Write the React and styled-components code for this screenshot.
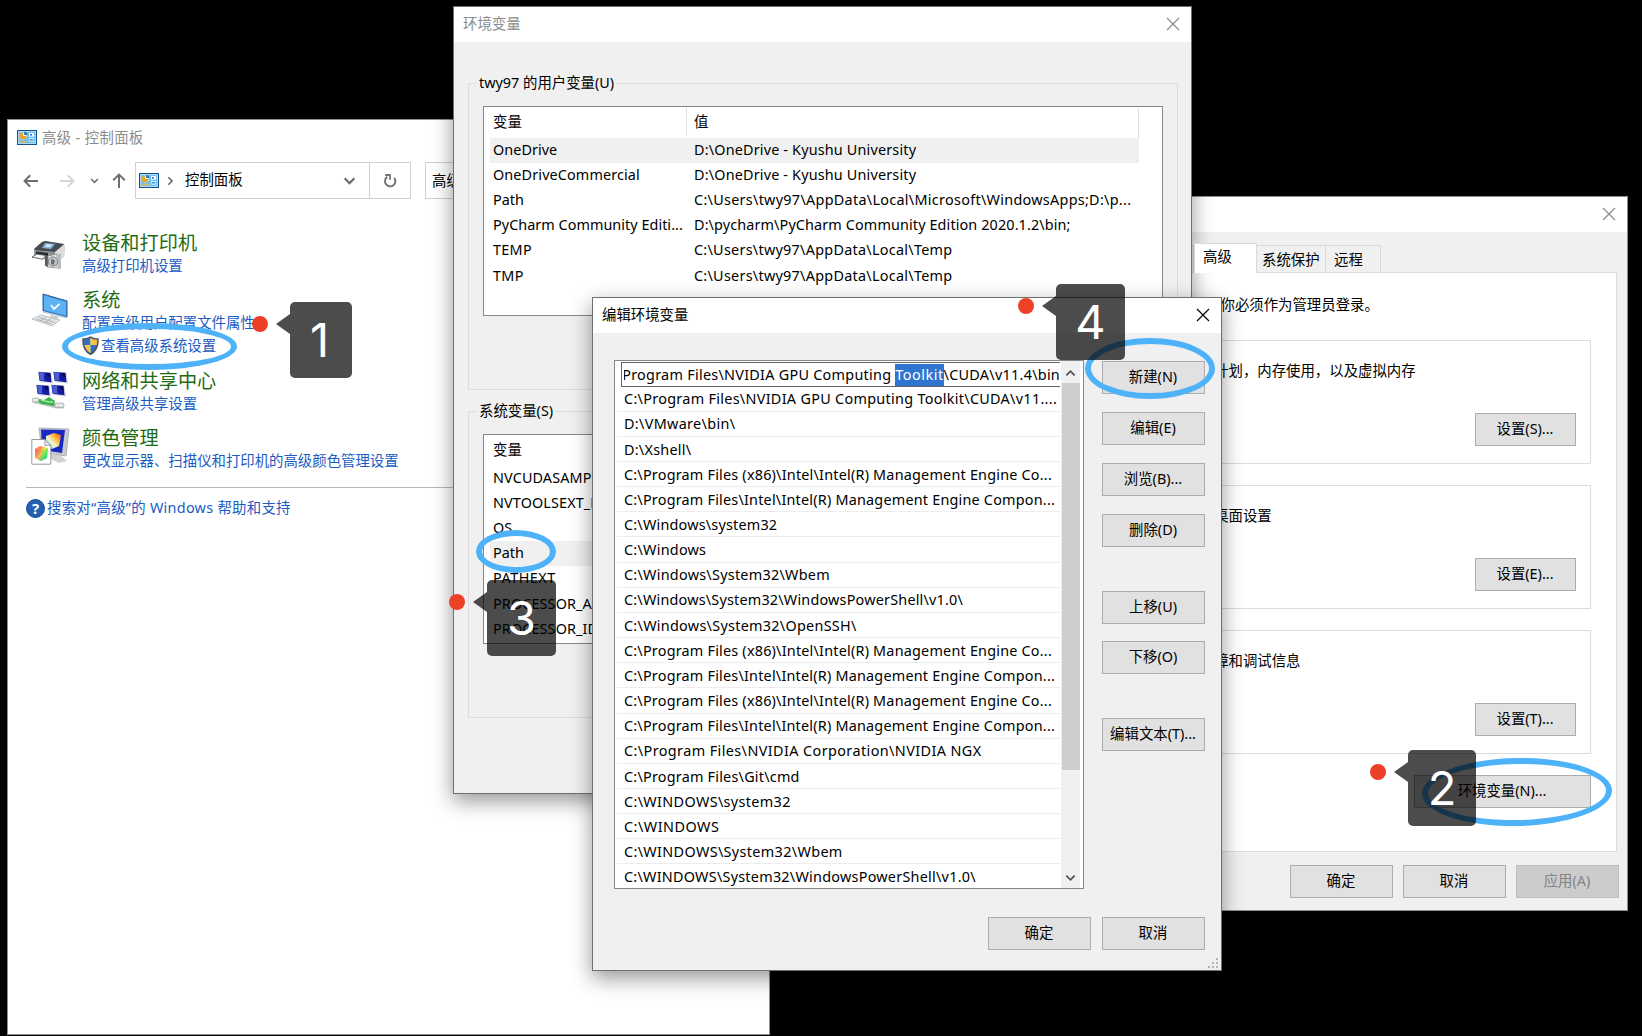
import React from "react";
import styled, { createGlobalStyle, css } from "styled-components";

const GlobalStyle = createGlobalStyle`
  * { box-sizing: border-box; }
  html, body { margin: 0; padding: 0; background: #000; }
  body {
    font-family: "Noto Sans", "Noto Sans CJK SC", sans-serif;
    font-size: 14.4px;
    line-height: 20px;
    color: #000;
    overflow: hidden;
  }
`;

const Desktop = styled.main`
  position: relative;
  width: 1642px;
  height: 1036px;
  background: #000;
  overflow: hidden;
  white-space: nowrap;
`;

const Spaced = styled.span`
  letter-spacing: ${(p) => p.$ls || 0}px;
`;

/* ---------- windows ---------- */

const Window = styled.section`
  position: absolute;
  left: ${(p) => p.$x}px;
  top: ${(p) => p.$y}px;
  width: ${(p) => p.$w}px;
  height: ${(p) => p.$h}px;
  display: flex;
  flex-direction: column;
  background: ${(p) => p.$bg || "#f0f0f0"};
  border: 1px solid ${(p) => p.$edge || "#6f6f6f"};
  ${(p) => p.$raised && css`box-shadow: 0 7px 20px rgba(0, 0, 0, 0.42);`}
`;

const TitleBar = styled.header`
  flex: none;
  display: flex;
  align-items: center;
  justify-content: space-between;
  height: 35px;
  padding: 0 11px 2px 9px;
  background: #fff;
  color: ${(p) => (p.$active ? "#000" : "#8c8c8c")};
`;

const CloseIcon = ({ color = "#8a8a8a" }) => (
  <svg width="14" height="14" viewBox="0 0 14 14" fill="none" stroke={color} strokeWidth="1.2">
    <path d="M1 1l12 12M13 1L1 13" />
  </svg>
);

const PushButton = styled.button`
  flex: none;
  display: flex;
  align-items: center;
  justify-content: center;
  width: ${(p) => p.$w || 103}px;
  height: 33px;
  margin: ${(p) => p.$mt || 0}px 0 0;
  padding: 0 1px 1px 0;
  font: inherit;
  color: #000;
  background: #e1e1e1;
  border: 1px solid #adadad;
  &:disabled {
    color: #838383;
    background: #ccc;
    border-color: #bfbfbf;
  }
`;

/* ---------- control panel ---------- */

const PanelTitle = styled.header`
  display: flex;
  align-items: center;
  gap: 5px;
  height: 35px;
  padding: 0 0 0 9px;
  color: #8c8c8c;
`;

const NavBar = styled.nav`
  display: flex;
  align-items: center;
  height: 37px;
  margin-top: 7px;
  padding-left: 15px;
`;

const NavGlyph = styled.span`
  display: flex;
  flex: none;
  justify-content: center;
  width: ${(p) => p.$w}px;
  margin-right: ${(p) => p.$mr || 0}px;
`;

const AddressBox = styled.div`
  display: flex;
  align-items: center;
  width: 276px;
  height: 37px;
  border: 1px solid #d0d0d0;
  padding-left: 3px;
`;

const AddressText = styled.span`
  flex: 1;
  padding-bottom: 1px;
`;

const RefreshCell = styled.span`
  display: flex;
  align-items: center;
  justify-content: center;
  width: 41px;
  height: 35px;
  margin-left: 13px;
  border-left: 1px solid #d0d0d0;
`;

const SearchBox = styled.div`
  width: 200px;
  height: 37px;
  margin-left: 14px;
  padding: 8px 6px;
  border: 1px solid #d0d0d0;
`;

const Categories = styled.div`
  display: flex;
  flex-direction: column;
  margin: 30px 0 0 23px;
`;

const Category = styled.article`
  display: grid;
  grid-template-columns: 51px 1fr;
  height: ${(p) => p.$h}px;
`;

const CategoryIcon = styled.div`
  padding-top: ${(p) => p.$pt || 0}px;
`;

const CategoryName = styled.h2`
  margin: 0;
  font-size: 19.2px;
  font-weight: 400;
  line-height: 27px;
  height: 25px;
  color: #1f6b12;
`;

const TaskLink = styled.a`
  display: flex;
  align-items: center;
  gap: 2px;
  height: 23px;
  line-height: 20px;
  color: #1b5cc4;
`;

const HelpRow = styled.footer`
  display: flex;
  align-items: center;
  gap: 2px;
  margin: 0 0 0 18px;
  padding-top: 10px;
  border-top: 1px solid #b8b8b8;
  color: #1b5cc4;
`;

const PanelIcon = () => (
  <svg width="20" height="15" viewBox="0 0 20 15">
    <rect x="0.5" y="0.5" width="19" height="14" fill="#6fc0f4" stroke="#16518c" />
    <rect x="1.5" y="1.5" width="17" height="12" fill="none" stroke="#a9dcfa" />
    <circle cx="6.2" cy="6" r="3.4" fill="#fff" />
    <path d="M6.2 6V2.6A3.4 3.4 0 1 0 9.6 6z" fill="#e9a52b" />
    <path d="M7.2 5V1.8A3.3 3.3 0 0 1 10.3 5z" fill="#2a6fb5" />
    <rect x="12" y="3" width="5" height="3.6" fill="#fff" />
    <rect x="13" y="4" width="2" height="1.6" fill="#2f78bd" />
    <rect x="12" y="8" width="5" height="3.6" fill="#d7effc" />
    <rect x="3" y="10.8" width="7" height="1.6" fill="#d9b45e" />
    <rect x="12.6" y="9.2" width="3.6" height="1.2" fill="#2f78bd" />
  </svg>
);

const Arrow = ({ dir, color }) => (
  <svg width="16" height="16" viewBox="0 0 16 16" fill="none" stroke={color} strokeWidth="2">
    <g transform={`rotate(${dir} 8 8)`}>
      <path d="M1.5 8H15M7.2 2.2L1.6 8l5.6 5.8" />
    </g>
  </svg>
);

const Chevron = ({ size = 12, turn = 0, color = "#6b6b6b", weight = 2 }) => (
  <svg width={size} height={size} viewBox="0 0 12 12" fill="none" stroke={color} strokeWidth={weight}>
    <path d="M1.5 4L6 8.5 10.5 4" transform={`rotate(${turn} 6 6)`} />
  </svg>
);

const RefreshIcon = () => (
  <svg width="14" height="15" viewBox="0 0 14 15" fill="none" stroke="#747474" strokeWidth="2">
    <path d="M11.2 4.800A5.200 5.200 0 1 1 4.200 3.900" />
    <path d="M2.200 2h4.800v4.800" strokeWidth="1.800" />
  </svg>
);

const PrinterIcon = () => (
  <svg width="36" height="31" viewBox="0 0 36 31">
    <path d="M3 9l8-7 3-1 19 3 1 4-1 9-8 4-14-2-8-4z" fill="#b4b7ba" />
    <path d="M3 9l8-7 3-1 19 3-9 8-18-1z" fill="#474b50" />
    <path d="M14 3l10 1-4 5-9-1z" fill="#7fb3dd" />
    <path d="M16 4l5 .6-2 2.600-5-.5z" fill="#cfe6f7" />
    <path d="M24 12l9-7 1 3-1 9-8 4z" fill="#dcddde" />
    <path d="M3 10l21 2v7L4 16z" fill="#8c9093" />
    <path d="M5 11.500l12 1.500v4L5 15z" fill="#26282b" />
    <path d="M1 17l5-3 9 1.500-3 3.500-2 0z" fill="#f3f3f3" stroke="#55585b" strokeWidth=".9" />
    <path d="M14 15l3 .5v12l-3-2z" fill="#55585b" />
    <path d="M17 16l9-2v14l-9-1z" fill="#e9eaea" stroke="#8d8f91" strokeWidth=".8" />
    <path d="M27 14.500l3-1v15l-3 1z" fill="#b9bcbe" />
    <circle cx="22" cy="21.500" r="4.600" fill="#c9cccd" stroke="#77797b" />
    <path d="M20 19l4 1-1 5-3-1z" fill="#68707a" />
  </svg>
);

const SystemIcon = () => (
  <svg width="37" height="35" viewBox="0 0 37 35">
    <path d="M12 1l24 7v16l-24-6z" fill="#3c8edb" stroke="#2c5f93" strokeWidth="1" />
    <path d="M13 2.500l22 6.400v13.600L13 17z" fill="#5db2f5" />
    <path d="M20 12l3 4 5.500-5" fill="none" stroke="#fff" strokeWidth="1.700" />
    <path d="M12 18l24 6v1.400L12 19.600z" fill="#a9c6dd" />
    <path d="M1 26l9-4 19 5-8 6z" fill="#e4e6e8" stroke="#b2b5b8" strokeWidth=".8" />
    <path d="M5 26l16 5M8 24.500l16 5M9 28l6-4M14 29.500l6-4" stroke="#a3a7aa" strokeWidth=".8" />
    <path d="M20 22l8 2-3 3-7-2z" fill="#c8cbce" />
  </svg>
);

const NetworkIcon = () => (
  <svg width="38" height="38" viewBox="0 0 38 38">
    {[[6, 0], [21, 0], [4, 13], [19, 13]].map(([x, y]) => (
      <g key={`${x}-${y}`} transform={`translate(${x} ${y})`}>
        <path d="M1 .5L14.500 1.500l1.500 11L3 11z" fill="#d5d8e4" />
        <path d="M1.500 1l12 .8 1 9.400L2.500 9.800z" fill="#15199e" />
        <path d="M2 1.300l5 .4c1 3-1 4 1 7.800L3 9.400z" fill="#4a60d4" />
        <path d="M9 2l4 .3.600 4c-3 0-3-2-4.600-4.300z" fill="#080a5c" />
      </g>
    ))}
    <path d="M1 28l9 .5 17 5.500 6-.5v4l-8 0L2 32z" fill="#c4c8c6" />
    <path d="M7 28l6 1 5-3 6 4-1 5-12-2-4-2z" fill="#35b449" />
    <path d="M10 29l8 2 4 0" stroke="#9beba3" strokeWidth="1.500" fill="none" />
    <rect x="1" y="27" width="7" height="4" rx="2" fill="#e4e7e6" stroke="#9da19f" strokeWidth=".7" />
    <rect x="24" y="32" width="9" height="4.500" rx="2" fill="#e4e7e6" stroke="#9da19f" strokeWidth=".7" />
  </svg>
);

const ColorIcon = () => (
  <svg width="39" height="38" viewBox="0 0 39 38">
    <defs>
      <linearGradient id="hue" x1="0" y1="0" x2="1" y2="1">
        <stop offset="0" stopColor="#ff4fd0" />
        <stop offset=".3" stopColor="#ff9a3c" />
        <stop offset=".5" stopColor="#f4f24a" />
        <stop offset=".75" stopColor="#45e36c" />
        <stop offset="1" stopColor="#3fb8ff" />
      </linearGradient>
      <linearGradient id="hueBack" x1="0" y1="1" x2="1" y2="0">
        <stop offset="0" stopColor="#41d8ff" />
        <stop offset=".4" stopColor="#f2f6d0" />
        <stop offset=".7" stopColor="#ffb02e" />
        <stop offset="1" stopColor="#e8413a" />
      </linearGradient>
    </defs>
    <path d="M8 1l30 1-3 27-24-3z" fill="#c7cacd" stroke="#9a9da0" strokeWidth=".7" />
    <path d="M10 2.500l24 .5-3 23-20-3z" fill="#1728c4" />
    <path d="M20 27l10 2 6 5-8 2-8-4z" fill="#d0d2d4" />
    <path d="M15 9l8-3 7 2-2 11-7 3-6-5z" fill="url(#hueBack)" />
    <path d="M.8 12.500h13l6 6V37.200H.8z" fill="#fff" stroke="#8d8f91" strokeWidth=".9" />
    <path d="M13.800 12.500v6h6z" fill="#e2e4e6" stroke="#8d8f91" strokeWidth=".7" />
    <path d="M4 22l5-3 8 2-1 10-6 3-6-3z" fill="url(#hue)" />
    <path d="M4 22l6 2v10l-6-3z" fill="#ef3e9a" fillOpacity=".3" />
    <path d="M10 24l7-3-1 10-6 3z" fill="#39d95e" fillOpacity=".4" />
  </svg>
);

const ShieldIcon = () => (
  <svg width="17" height="19" viewBox="0 0 17 19">
    <defs>
      <clipPath id="shield">
        <path d="M8.500 1.500C6.500 3 4 3.400 1.400 3.300 1 9.500 2.500 14.500 8.500 17.800c6-3.300 7.500-8.300 7.100-14.500C13 3.400 10.500 3 8.500 1.500z" />
      </clipPath>
    </defs>
    <g clipPath="url(#shield)">
      <rect width="8.500" height="9" fill="#2e6fc0" />
      <rect x="8.500" width="8.500" height="9" fill="#f6c343" />
      <rect y="9" width="8.500" height="10" fill="#f6c343" />
      <rect x="8.500" y="9" width="8.500" height="10" fill="#2e6fc0" />
    </g>
    <path
      d="M8.500 1.200C6.500 2.700 4 3.100 1.100 3 .7 9.500 2.300 14.900 8.500 18.200c6.200-3.300 7.800-8.700 7.400-15.200C13 3.100 10.500 2.700 8.500 1.200z"
      fill="none"
      stroke="#4c5561"
      strokeWidth="1.600"
    />
  </svg>
);

const HelpBadge = styled.span`
  display: flex;
  align-items: center;
  justify-content: center;
  width: 19px;
  height: 19px;
  border-radius: 50%;
  border: 1px solid #1a4a8e;
  background: #245fb4;
  color: #fff;
  font-size: 15px;
  font-weight: 700;
`;

function ControlPanel() {
  return (
    <Window $x={7} $y={119} $w={763} $h={916} $bg="#fff" $edge="#8d8d8d">
      <PanelTitle>
        <PanelIcon />
        <Spaced $ls={0.35}>高级 - 控制面板</Spaced>
      </PanelTitle>
      <NavBar>
        <NavGlyph $w={16} $mr={20}><Arrow dir={0} color="#6e6e6e" /></NavGlyph>
        <NavGlyph $w={16} $mr={14}><Arrow dir={180} color="#d6d6d6" /></NavGlyph>
        <NavGlyph $w={10} $mr={12}><Chevron size={9} /></NavGlyph>
        <NavGlyph $w={16} $mr={8}><Arrow dir={90} color="#6e6e6e" /></NavGlyph>
        <AddressBox>
          <NavGlyph $w={20} $mr={6}><PanelIcon /></NavGlyph>
          <NavGlyph $w={10} $mr={10}><Chevron size={10} turn={-90} /></NavGlyph>
          <AddressText>控制面板</AddressText>
          <Chevron size={13} />
          <RefreshCell><RefreshIcon /></RefreshCell>
        </AddressBox>
        <SearchBox>高级</SearchBox>
      </NavBar>
      <Categories>
        <Category $h={57}>
          <CategoryIcon $pt={11}><PrinterIcon /></CategoryIcon>
          <div>
            <CategoryName>设备和打印机</CategoryName>
            <TaskLink>高级打印机设置</TaskLink>
          </div>
        </Category>
        <Category $h={81}>
          <CategoryIcon $pt={7}><SystemIcon /></CategoryIcon>
          <div>
            <CategoryName>系统</CategoryName>
            <TaskLink>配置高级用户配置文件属性</TaskLink>
            <TaskLink><ShieldIcon />查看高级系统设置</TaskLink>
          </div>
        </Category>
        <Category $h={57}>
          <CategoryIcon $pt={4}><NetworkIcon /></CategoryIcon>
          <div>
            <CategoryName>网络和共享中心</CategoryName>
            <TaskLink>管理高级共享设置</TaskLink>
          </div>
        </Category>
        <Category $h={63}>
          <CategoryIcon $pt={3}><ColorIcon /></CategoryIcon>
          <div>
            <CategoryName>颜色管理</CategoryName>
            <TaskLink>更改显示器、扫描仪和打印机的高级颜色管理设置</TaskLink>
          </div>
        </Category>
      </Categories>
      <HelpRow>
        <HelpBadge>?</HelpBadge>
        <Spaced $ls={0.28}>搜索对“高级”的 Windows 帮助和支持</Spaced>
      </HelpRow>
    </Window>
  );
}

/* ---------- system properties ---------- */

const TabStrip = styled.div`
  display: flex;
  align-items: flex-end;
  height: 40px;
  padding-left: 13px;
`;

const Tab = styled.div`
  width: ${(p) => p.$w}px;
  height: 27px;
  padding: 4px 0 0 ${(p) => p.$pl || 5}px;
  border: 1px solid #d9d9d9;
  border-left-width: ${(p) => (p.$first ? 1 : 0)}px;
  border-bottom: 0;
  background: #f0f0f0;
  ${(p) =>
    p.$active &&
    css`
      height: 30px;
      margin-bottom: -1px;
      padding-top: 3px;
      background: #fff;
      border-left-width: 1px;
      z-index: 1;
    `}
`;

const TabPage = styled.div`
  display: flex;
  flex-direction: column;
  width: 542px;
  height: 580px;
  margin-left: 13px;
  padding: 22px 25px 0 10px;
  background: #fff;
  border: 1px solid #dcdcdc;
`;

const Notice = styled.p`
  margin: 0 0 15px 5px;
`;

const PageGroup = styled.fieldset`
  display: flex;
  flex-direction: column;
  height: 134px;
  margin: 0 0 11px;
  padding: 11px 14px 0 12px;
  min-width: 0;
  border: 1px solid #dcdcdc;
`;

const Legend = styled.legend`
  height: 20px;
  padding: 0 3px;
  margin-left: 0;
`;

const EndRow = styled.div`
  display: flex;
  justify-content: flex-end;
  gap: ${(p) => p.$gap || 0}px;
  margin: ${(p) => p.$m};
`;

const pageGroups = [
  { name: "性能", text: "视觉效果，处理器计划，内存使用，以及虚拟内存", button: "设置(S)..." },
  { name: "用户配置文件", text: "与登录帐户相关的桌面设置", button: "设置(E)..." },
  { name: "启动和故障恢复", text: "系统启动、系统故障和调试信息", button: "设置(T)..." },
];

function SystemProperties() {
  return (
    <Window $x={1061} $y={196} $w={567} $h={715} $edge="#8d8d8d">
      <TitleBar>
        <span>系统属性</span>
        <CloseIcon />
      </TitleBar>
      <TabStrip>
        <Tab $w={50} $first>硬件</Tab>
        <Tab $w={69}>计算机名</Tab>
        <Tab $w={63} $pl={8} $active>高级</Tab>
        <Tab $w={69}>系统保护</Tab>
        <Tab $w={55} $pl={8}>远程</Tab>
      </TabStrip>
      <TabPage>
        <Notice>要进行大多数更改，你必须作为管理员登录。</Notice>
        {pageGroups.map((g) => (
          <PageGroup key={g.name}>
            <Legend>{g.name}</Legend>
            <span>{g.text}</span>
            <EndRow $m="32px 0 0">
              <PushButton $w={101}>{g.button}</PushButton>
            </EndRow>
          </PageGroup>
        ))}
        <EndRow $m="10px 0 0">
          <PushButton $w={177}>环境变量(N)...</PushButton>
        </EndRow>
      </TabPage>
      <EndRow $gap={10} $m="13px 8px 0 0">
        <PushButton>确定</PushButton>
        <PushButton>取消</PushButton>
        <PushButton disabled>应用(A)</PushButton>
      </EndRow>
    </Window>
  );
}

/* ---------- environment variables ---------- */

const VarGroup = styled.fieldset`
  width: 710px;
  height: ${(p) => p.$h}px;
  margin: ${(p) => p.$mt}px 0 0 14px;
  padding: 13px 14px 0 15px;
  min-width: 0;
  border: 1px solid #dcdcdc;
`;

const VarLegend = styled.legend`
  height: 20px;
  margin-left: -8px;
  padding: 0 3px;
`;

const VarList = styled.div`
  height: 210px;
  margin-left: -1px;
  padding: 1px 0 0 6px;
  overflow: hidden;
  background: #fff;
  border: 1px solid #828790;
`;

const VarRow = styled.div`
  display: grid;
  grid-template-columns: 201px 1fr;
  align-items: center;
  width: 649px;
  height: 25.1px;
  padding-left: 3px;
  background: ${(p) => (p.$selected ? "#f0f0f0" : "transparent")};
`;

const VarHead = styled(VarRow)`
  height: 29.500px;
  grid-template-columns: 193px 1fr;
  border-right: 1px solid #e2e2e2;
`;

const HeadCell = styled.span`
  height: 29px;
  padding: 4px 0 0 ${(p) => p.$pl || 0}px;
  border-left: ${(p) => (p.$line ? "1px solid #e2e2e2" : "0")};
`;

const userVars = [
  ["OneDrive", "D:\\OneDrive - Kyushu University", 0.05, 0.17],
  ["OneDriveCommercial", "D:\\OneDrive - Kyushu University", 0.12, 0.17],
  ["Path", "C:\\Users\\twy97\\AppData\\Local\\Microsoft\\WindowsApps;D:\\p...", 0, 0.29],
  ["PyCharm Community Editi...", "D:\\pycharm\\PyCharm Community Edition 2020.1.2\\bin;", 0.04, 0.12],
  ["TEMP", "C:\\Users\\twy97\\AppData\\Local\\Temp", 0.3, 0.27],
  ["TMP", "C:\\Users\\twy97\\AppData\\Local\\Temp", 0.3, 0.27],
];

const systemVars = [
  ["NVCUDASAMPLES_ROOT", "", 0.12],
  ["NVTOOLSEXT_PATH", "", 0.12],
  ["OS", "", 0],
  ["Path", "", 0],
  ["PATHEXT", "", 0.5],
  ["PROCESSOR_ARCHITECTURE", "", 0.12],
  ["PROCESSOR_IDENTIFIER", "", 0.12],
];

const Variables = ({ rows, selected }) => (
  <VarList>
    <VarHead>
      <HeadCell>变量</HeadCell>
      <HeadCell $line $pl={7}>值</HeadCell>
    </VarHead>
    {rows.map(([name, value, nameSpacing, valueSpacing], i) => (
      <VarRow key={name} $selected={i === selected}>
        <Spaced $ls={nameSpacing}>{name}</Spaced>
        <Spaced $ls={valueSpacing}>{value}</Spaced>
      </VarRow>
    ))}
  </VarList>
);

function EnvironmentVariables() {
  return (
    <Window $x={453} $y={6} $w={739} $h={788} $raised>
      <TitleBar>
        <span>环境变量</span>
        <CloseIcon />
      </TitleBar>
      <VarGroup $h={317} $mt={31}>
        <VarLegend>twy97 的用户变量(U)</VarLegend>
        <Variables rows={userVars} selected={0} />
      </VarGroup>
      <VarGroup $h={317} $mt={11}>
        <VarLegend>系统变量(S)</VarLegend>
        <Variables rows={systemVars} selected={3} />
      </VarGroup>
    </Window>
  );
}

/* ---------- edit environment variable ---------- */

const EditBody = styled.div`
  display: flex;
  gap: 18px;
  padding: 27px 0 0 21px;
`;

const PathBox = styled.div`
  display: flex;
  width: 470px;
  height: 529px;
  padding: 0 3px 0 2px;
  background: #fff;
  border: 1px solid #828790;
  overflow: hidden;
`;

const PathRows = styled.div`
  display: flex;
  flex-direction: column;
  width: 444px;
  margin-right: 1px;
`;

const PathRow = styled.div`
  flex: none;
  height: 25.17px;
  padding: 2.7px 0 0 7px;
  letter-spacing: ${(p) => p.$ls}px;
  border-bottom: 1px solid #ededed;
`;

const PathEditor = styled.div`
  flex: none;
  display: flex;
  justify-content: flex-end;
  height: 25px;
  margin: 0.5px 0 0 4px;
  padding: 1px 0 0 0;
  border: 1px solid #646464;
  border-right: 0;
`;

const EditorText = styled.div`
  display: flex;
  justify-content: flex-end;
  width: 436px;
  line-height: 21px;
  letter-spacing: 0.27px;
  overflow: hidden;
  white-space: pre;
`;

const Marked = styled.mark`
  background: #2e75d1;
  color: #fff;
  letter-spacing: 0.5px;
`;

const ScrollBar = styled.div`
  display: flex;
  flex-direction: column;
  align-items: center;
  width: 19px;
  padding-top: 7px;
  background: #f0f0f0;
`;

const Thumb = styled.div`
  width: 18px;
  height: 387px;
  margin: 4px 0 102px;
  background: #cdcdcd;
`;

const ButtonColumn = styled.div`
  display: flex;
  flex-direction: column;
  padding-top: 1px;
`;

const Grip = styled.div`
  display: flex;
  justify-content: flex-end;
  margin: 8px 3px 0 0;
`;

const x86 = "C:\\Program Files (x86)\\Intel\\Intel(R) Management Engine Co...";
const intel = "C:\\Program Files\\Intel\\Intel(R) Management Engine Compon...";

const paths = [
  ["C:\\Program Files\\NVIDIA GPU Computing Toolkit\\CUDA\\v11....", 0.3],
  ["D:\\VMware\\bin\\", 0.33],
  ["D:\\Xshell\\", 0.25],
  [x86, 0.21],
  [intel, 0.21],
  ["C:\\Windows\\system32", 0.2],
  ["C:\\Windows", 0.25],
  ["C:\\Windows\\System32\\Wbem", 0.26],
  ["C:\\Windows\\System32\\WindowsPowerShell\\v1.0\\", 0.2],
  ["C:\\Windows\\System32\\OpenSSH\\", 0.28],
  [x86, 0.21],
  [intel, 0.21],
  [x86, 0.21],
  [intel, 0.21],
  ["C:\\Program Files\\NVIDIA Corporation\\NVIDIA NGX", 0.41],
  ["C:\\Program Files\\Git\\cmd", 0.22],
  ["C:\\WINDOWS\\system32", 0.35],
  ["C:\\WINDOWS", 0.5],
  ["C:\\WINDOWS\\System32\\Wbem", 0.35],
  ["C:\\WINDOWS\\System32\\WindowsPowerShell\\v1.0\\", 0.25],
];

function EditVariable() {
  return (
    <Window $x={592} $y={297} $w={630} $h={674} $raised>
      <TitleBar $active>
        <span>编辑环境变量</span>
        <CloseIcon color="#000" />
      </TitleBar>
      <EditBody>
        <PathBox>
          <PathRows>
            <PathEditor>
              <EditorText>
                {"C:\\Program Files\\NVIDIA GPU Computing "}
                <Marked>Toolkit</Marked>
                {"\\CUDA\\v11.4\\bin"}
              </EditorText>
            </PathEditor>
            {paths.map(([path, spacing], i) => (
              <PathRow key={i} $ls={spacing}>{path}</PathRow>
            ))}
          </PathRows>
          <ScrollBar>
            <Chevron size={11} turn={180} color="#505050" />
            <Thumb />
            <Chevron size={11} color="#505050" />
          </ScrollBar>
        </PathBox>
        <ButtonColumn>
          <PushButton>新建(N)</PushButton>
          <PushButton $mt={18}>编辑(E)</PushButton>
          <PushButton $mt={18}>浏览(B)...</PushButton>
          <PushButton $mt={18}>删除(D)</PushButton>
          <PushButton $mt={44}>上移(U)</PushButton>
          <PushButton $mt={17}>下移(O)</PushButton>
          <PushButton $mt={44}>编辑文本(T)...</PushButton>
        </ButtonColumn>
      </EditBody>
      <EndRow $gap={11} $m="28px 16px 0 0">
        <PushButton>确定</PushButton>
        <PushButton>取消</PushButton>
      </EndRow>
      <Grip>
        <svg width="10" height="10" viewBox="0 0 10 10" fill="#b4b4b4">
          <path d="M8 0h2v2H8zM4 4h2v2H4zM8 4h2v2H8zM0 8h2v2H0zM4 8h2v2H4zM8 8h2v2H8z" />
        </svg>
      </Grip>
    </Window>
  );
}

/* ---------- annotations ---------- */

const Ring = styled.div`
  position: absolute;
  left: ${(p) => p.$x}px;
  top: ${(p) => p.$y}px;
  width: ${(p) => p.$w}px;
  height: ${(p) => p.$h}px;
  border: 6px solid #4eb2f9;
  border-radius: 50%;
  transform: rotate(${(p) => p.$tilt || 0}deg);
`;

const Dot = styled.div`
  position: absolute;
  left: ${(p) => p.$x - 8}px;
  top: ${(p) => p.$y - 8}px;
  width: 16px;
  height: 16px;
  border-radius: 50%;
  background: #ec4127;
`;

const Callout = styled.div`
  position: absolute;
  left: ${(p) => p.$x}px;
  top: ${(p) => p.$y}px;
  width: ${(p) => p.$w}px;
  height: 76px;
  display: flex;
  align-items: center;
  justify-content: center;
  padding-right: ${(p) => p.$pr || 0}px;
  border-radius: 5px;
  background: rgba(0, 0, 0, 0.7);
  color: #fff;
  font-family: Inter, "Liberation Sans", sans-serif;
  font-size: 47px;
  line-height: 76px;
  &::before {
    content: "";
    position: absolute;
    right: 100%;
    top: 12px;
    border: 10px solid transparent;
    border-left-width: 0;
    border-right: 14px solid rgba(0, 0, 0, 0.7);
  }
`;

export default function App() {
  return (
    <>
      <GlobalStyle />
      <Desktop>
        <ControlPanel />
        <SystemProperties />
        <EnvironmentVariables />
        <EditVariable />
        <Ring $x={62} $y={323} $w={175} $h={47} />
        <Ring $x={476} $y={530} $w={80} $h={43} />
        <Ring $x={1085} $y={338} $w={130} $h={61} />
        <Ring $x={1422} $y={758} $w={190} $h={68} $tilt={-1} />
        <Dot $x={260} $y={324} />
        <Dot $x={457} $y={602} />
        <Dot $x={1026} $y={306} />
        <Dot $x={1378} $y={772} />
        <Callout $x={290} $y={302} $w={62} $pr={3}>1</Callout>
        <Callout $x={487} $y={580} $w={69}>3</Callout>
        <Callout $x={1056} $y={284} $w={69}>4</Callout>
        <Callout $x={1408} $y={750} $w={68}>2</Callout>
      </Desktop>
    </>
  );
}
